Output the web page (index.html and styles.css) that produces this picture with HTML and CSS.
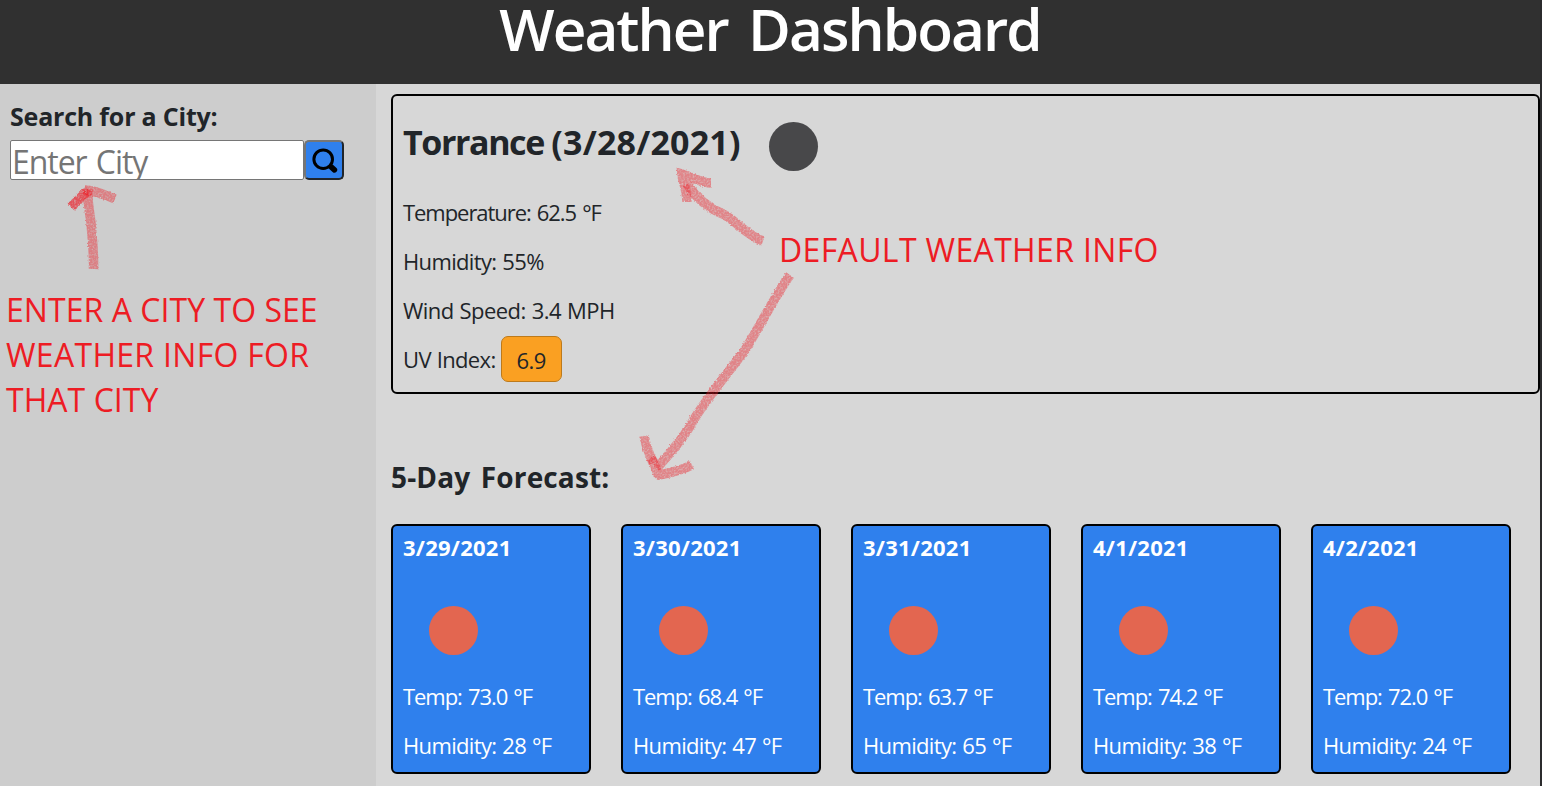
FILE: index.html
```html
<!DOCTYPE html>
<html lang="en">
<head>
<meta charset="utf-8">
<title>Weather Dashboard</title>
<link rel="stylesheet" href="styles.css">
</head>
<body>
<div class="page">
  <header class="header"><h1 class="title">Weather Dashboard</h1></header>
  <div class="layout">
    <aside class="sidebar">
      <h2 class="search-title">Search for a City:</h2>
      <form class="search">
        <div class="search-input">Enter City</div>
        <button class="search-button" type="button" aria-label="Search">
          <svg class="search-icon" viewBox="0 0 26 26"><circle cx="11.2" cy="11.2" r="9.3" fill="none" stroke="#000" stroke-width="3"/><path d="M17.8 17.8l1.2 1" stroke="#000" stroke-width="3.4"/><path d="M19.4 19.2l3 2.6" stroke="#000" stroke-width="5.6" stroke-linecap="round"/></svg>
        </button>
      </form>
      <p class="note note-search">ENTER A CITY TO SEE<br><span class="note-wide">WEATHER INFO FOR</span><br>THAT CITY</p>
    </aside>
    <main class="main">
      <section class="current">
        <div class="current-head"><h2 class="city">Torrance <span class="city-date">(3/28/2021)</span></h2><span class="dot dot-dark"></span></div>
        <p class="row row-temp">Temperature: 62.5 °F</p>
        <p class="row">Humidity: 55%</p>
        <p class="row row-wind">Wind Speed: 3.4 MPH</p>
        <p class="row row-uv">UV Index: <span class="uv">6.9</span></p>
      </section>
      <h2 class="forecast-title">5-Day Forecast:</h2>
      <section class="cards">
        <article class="card"><h3 class="date">3/29/2021</h3><span class="dot"></span><p class="row row-temp">Temp: 73.0 °F</p><p class="row">Humidity: 28 °F</p></article>
        <article class="card"><h3 class="date">3/30/2021</h3><span class="dot"></span><p class="row row-temp">Temp: 68.4 °F</p><p class="row">Humidity: 47 °F</p></article>
        <article class="card"><h3 class="date">3/31/2021</h3><span class="dot"></span><p class="row row-temp">Temp: 63.7 °F</p><p class="row">Humidity: 65 °F</p></article>
        <article class="card"><h3 class="date">4/1/2021</h3><span class="dot"></span><p class="row row-temp">Temp: 74.2 °F</p><p class="row">Humidity: 38 °F</p></article>
        <article class="card"><h3 class="date">4/2/2021</h3><span class="dot"></span><p class="row row-temp">Temp: 72.0 °F</p><p class="row">Humidity: 24 °F</p></article>
      </section>
    </main>
  </div>
  <p class="note note-default">DEFAULT WEATHER INFO</p>
  <svg class="arrows" viewBox="0 0 1542 786">
    <defs>
      <filter id="crayon" filterUnits="userSpaceOnUse" x="0" y="0" width="1542" height="786" color-interpolation-filters="sRGB">
        <feTurbulence type="fractalNoise" baseFrequency="0.55" numOctaves="2" seed="4" result="noise"/>
        <feColorMatrix in="noise" type="matrix" values="0 0 0 0 0  0 0 0 0 0  0 0 0 0 0  1.3 0 0 0 0.25" result="grain"/>
        <feDisplacementMap in="SourceGraphic" in2="noise" scale="3" xChannelSelector="R" yChannelSelector="G" result="rough"/>
        <feComposite in="rough" in2="grain" operator="in"/>
      </filter>
    </defs>
    <g class="strokes" filter="url(#crayon)">
      <path d="M93.500 269C94 252 92 236 91 223C90 212 87 203 88 189"/>
      <path d="M71 207L89 190"/>
      <path d="M71 207L86 192"/>
      <path d="M85 190C95 190 105 195 115 199"/>
      <path d="M763 241C746 235 738 222 723 214C708 208 695 196 687 184"/>
      <path d="M687 202C687 189 683 184 682 174C692 177 702 183 711 183"/>
      <path d="M790 275C773 299 759 328 745 350C728 373 706 399 693 421C684 438 670 453 657 468"/>
      <path d="M644 436C646 447 650 455 653 463"/>
      <path d="M651 458C656 463 655 471 659 475C670 473 682 470 692 465"/>
    </g>
  </svg>
</div>
</body>
</html>
```
FILE: styles.css
```css
* { box-sizing: border-box; margin: 0; padding: 0; }

body {
  font-family: "Open Sans", "Noto Sans", sans-serif;
  color: #212529;
  background: #d7d7d7;
}

.page {
  position: relative;
  width: 1542px;
  height: 786px;
  overflow: hidden;
  border-right: 2px solid #2b2b2d;
}

.header { height: 84px; background: #303030; text-align: center; }

.title {
  color: #fff;
  font-size: 58.5px;
  font-weight: 600;
  line-height: 56px;
  letter-spacing: -1.95px;
  word-spacing: 7px;
}

.layout { display: flex; height: 702px; }

/* Search column */
.sidebar { width: 376px; background: #cdcdcd; padding: 8px 0 0 10px; }

.search-title {
  font-size: 25px;
  line-height: 48px;
  height: 48px;
  letter-spacing: -0.2px;
}

.search { display: flex; }

.search-input {
  width: 294px;
  height: 40px;
  padding-left: 1px;
  overflow: hidden;
  background: #fff;
  border: 1px solid #767676;
  border-radius: 2px;
  color: #757575;
  font-size: 32px;
  line-height: 41px;
  letter-spacing: -1.05px;
  word-spacing: 2px;
}

.search-button {
  width: 40px;
  height: 40px;
  padding: 1px 0 0 1px;
  display: flex;
  align-items: center;
  justify-content: center;
  background: #2f80ed;
  border: 2px solid;
  border-color: #767676 #212529 #212529 #767676;
  border-radius: 5px;
}

.search-icon { width: 26px; height: 26px; }

/* Handwritten-style annotations */
.note {
  color: #ed1c24;
  font-size: 32px;
  line-height: 45px;
  letter-spacing: 0.05px;
  white-space: nowrap;
}

.note-search { margin: 107px 0 0 -4px; }
.note-wide { letter-spacing: 0.3px; }

.note-default {
  position: absolute;
  left: 779px;
  top: 227px;
  letter-spacing: 0.35px;
}

.arrows { position: absolute; left: 0; top: 0; width: 1542px; height: 786px; }

.strokes path {
  fill: none;
  stroke: #ed1c24;
  stroke-opacity: 0.44;
  stroke-width: 9.5px;
}

/* Current conditions */
.main { flex: 1; padding: 10px 0 0 15px; }

.current {
  width: 1149px;
  height: 300px;
  padding-left: 10px;
  border: 2px solid #000;
  border-radius: 6px;
}

.current-head { display: flex; height: 92px; }
.city { width: 339px; font-size: 34px; line-height: 92px; letter-spacing: -1.4px; white-space: nowrap; }
.city-date { letter-spacing: 0.2px; }

.dot {
  display: block;
  width: 49px;
  height: 49px;
  margin: 37px 0 17px 26px;
  border-radius: 50%;
  background: #e36650;
}

.dot-dark { margin: 26px 0 0 27px; background: #48484a; }

.row {
  height: 49px;
  font-size: 22px;
  line-height: 49px;
  letter-spacing: -0.65px;
  word-spacing: 0.8px;
  white-space: nowrap;
}

.row-temp { letter-spacing: -1.05px; word-spacing: 1.4px; }
.row-wind { letter-spacing: -0.55px; }
.row-uv { display: flex; align-items: center; }

.uv {
  width: 61px;
  height: 46px;
  margin: -1px 0 0 5px;
  border: 1px solid #bd7a1b;
  border-radius: 7px;
  background: #faa022;
  line-height: 46px;
  text-align: center;
}

/* Forecast */
.forecast-title {
  height: 130px;
  padding-top: 36px;
  font-size: 28px;
  line-height: 94px;
  letter-spacing: 0.15px;
  word-spacing: 3px;
}

.cards { display: flex; gap: 30px; }

.card {
  width: 200px;
  height: 250px;
  padding-left: 10px;
  border: 2px solid #000;
  border-radius: 6px;
  background: #2f80ed;
  color: #fff;
}

.date { font-size: 22px; line-height: 43px; letter-spacing: 0.25px; }
```
